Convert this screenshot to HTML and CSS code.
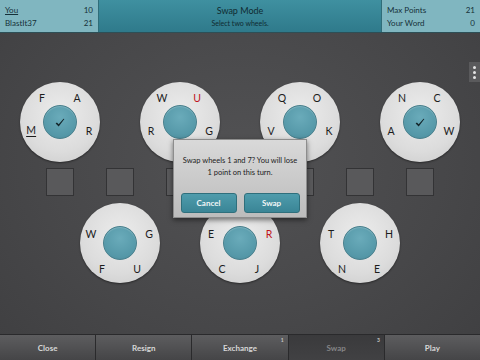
FILE: index.html
```html
<!DOCTYPE html>
<html lang="en">
<head>
    <meta charset="UTF-8">
    <title>Swap Mode</title>
    <link rel="stylesheet" href="styles.css">
</head>
<body>

<div class="screen">
    <header class="topbar">
        <div class="scores">
            <div class="row"><span class="me">You</span><span>10</span></div>
            <div class="row"><span>BlastIt37</span><span>21</span></div>
        </div>
        <div class="mode">
            <div class="mode-title">Swap Mode</div>
            <div class="mode-sub">Select two wheels.</div>
        </div>
        <div class="scores">
            <div class="row"><span>Max Points</span><span>21</span></div>
            <div class="row"><span>Your Word</span><span>0</span></div>
        </div>
    </header>

    <main class="board">
        <div class="wheels top">
            <div class="wheel">
                <span class="l a1">F</span><span class="l a2">A</span>
                <span class="l a3 under">M</span><span class="l a4">R</span>
                <div class="hub"><svg viewBox="0 0 16 16" width="14" height="14"><path d="M3 8.5 L6.5 12 L13 3.5 L12 3 L6.5 9.5 L4.5 7.3 Z" fill="#14262b"/></svg></div>
            </div>
            <div class="wheel">
                <span class="l a1">W</span><span class="l a2 red">U</span>
                <span class="l a3">R</span><span class="l a4">G</span>
                <div class="hub"></div>
            </div>
            <div class="wheel">
                <span class="l a1">Q</span><span class="l a2">O</span>
                <span class="l a3">V</span><span class="l a4">K</span>
                <div class="hub"></div>
            </div>
            <div class="wheel">
                <span class="l a1">N</span><span class="l a2">C</span>
                <span class="l a3">A</span><span class="l a4">W</span>
                <div class="hub"><svg viewBox="0 0 16 16" width="14" height="14"><path d="M3 8.5 L6.5 12 L13 3.5 L12 3 L6.5 9.5 L4.5 7.3 Z" fill="#14262b"/></svg></div>
            </div>
        </div>

        <div class="slots">
            <div class="slot"></div><div class="slot"></div><div class="slot"></div>
            <div class="slot"></div><div class="slot"></div><div class="slot"></div>
            <div class="slot"></div>
        </div>

        <div class="wheels bottom">
            <div class="wheel">
                <span class="l b1">W</span><span class="l b2">G</span>
                <span class="l b3">F</span><span class="l b4">U</span>
                <div class="hub"></div>
            </div>
            <div class="wheel">
                <span class="l b1">E</span><span class="l b2 red">R</span>
                <span class="l b3">C</span><span class="l b4">J</span>
                <div class="hub"></div>
            </div>
            <div class="wheel">
                <span class="l b1">T</span><span class="l b2">H</span>
                <span class="l b3">N</span><span class="l b4">E</span>
                <div class="hub"></div>
            </div>
        </div>

        <div class="menu-tab"><i></i><i></i><i></i></div>

        <div class="dialog">
            <p>Swap wheels 1 and 7? You will lose<br>1 point on this turn.</p>
            <div class="dialog-buttons">
                <button>Cancel</button>
                <button>Swap</button>
            </div>
        </div>
    </main>

    <footer class="toolbar">
        <button>Close</button>
        <button>Resign</button>
        <button>Exchange<sup>1</sup></button>
        <button class="active">Swap<sup>3</sup></button>
        <button>Play</button>
    </footer>
</div>

</body>
</html>
```

FILE: styles.css
```css
* {
    box-sizing: border-box;
}

body {
    margin: 0;
    font-family: Lato, "Open Sans", sans-serif;
    background-color: #474749;
}

.screen {
    width: 480px;
    height: 360px;
    display: flex;
    flex-direction: column;
    overflow: hidden;
    background: radial-gradient(ellipse at 50% 45%, #525254 0%, #474749 60%, #3f3f41 100%);
}

/* top bar */
.topbar {
    height: 33px;
    display: flex;
    border-bottom: 1px solid #2d4f56;
}

.scores {
    width: 98px;
    padding: 4px 5px 0 5px;
    background-color: #80b6c0;
    color: #153038;
    font-size: 8px;
}

.scores .row {
    display: flex;
    justify-content: space-between;
    height: 13px;
    line-height: 13px;
}

.me {
    text-decoration: underline;
}

.mode {
    flex: 1;
    background: linear-gradient(to bottom, #3f90a0, #2f7a8b);
    text-align: center;
    color: #102b31;
    border-left: 1px solid #2f6d79;
    border-right: 1px solid #2f6d79;
}

.mode-title {
    font-size: 9px;
    margin-top: 5px;
    line-height: 11px;
}

.mode-sub {
    font-size: 7px;
    margin-top: 3px;
    line-height: 9px;
}

/* board */
.board {
    flex: 1;
    position: relative;
    padding-top: 49px;
}

.wheels {
    display: flex;
}

.wheels.top {
    padding-left: 20px;
    gap: 40px;
}

.wheels.bottom {
    padding-left: 80px;
    gap: 40px;
}

.wheel {
    width: 80px;
    height: 80px;
    border-radius: 50%;
    background: radial-gradient(circle at 50% 40%, #ececec 0%, #dcdcdc 60%, #c9c9c9 100%);
    box-shadow: 0 1px 2px rgba(0,0,0,0.45);
    position: relative;
    display: flex;
    align-items: center;
    justify-content: center;
}

.hub {
    width: 34px;
    height: 34px;
    border-radius: 50%;
    background: radial-gradient(circle at 50% 35%, #6aabba 0%, #5598a8 70%, #4a8797 100%);
    border: 1px solid #477f8c;
    box-shadow: inset 0 1px 1px rgba(255,255,255,0.2);
    display: flex;
    align-items: center;
    justify-content: center;
}

.hub svg {
    margin-top: 1px;
}

.l {
    position: absolute;
    font-size: 10.5px;
    line-height: 10px;
    color: #1c1c1c;
    transform: translate(-50%, -50%);
}

.l.red {
    color: #c0141c;
}

.l.under {
    border-bottom: 1px solid #1c1c1c;
    padding-bottom: 1px;
}

.a1 { left: 22px; top: 16px; }
.a2 { left: 57px; top: 16px; }
.a3 { left: 11px; top: 49px; }
.a4 { left: 69px; top: 49px; }

.b1 { left: 11px; top: 31px; }
.b2 { left: 69px; top: 31px; }
.b3 { left: 22px; top: 66px; }
.b4 { left: 57px; top: 66px; }

.slots {
    display: flex;
    gap: 32px;
    padding-left: 46px;
    margin-top: 6px;
    margin-bottom: 7px;
}

.slot {
    width: 28px;
    height: 28px;
    background-color: #59595b;
    border: 1px solid #333335;
}

.menu-tab {
    position: absolute;
    right: 0;
    top: 29px;
    width: 11px;
    height: 20px;
    background-color: #5a5a5c;
    display: flex;
    flex-direction: column;
    align-items: center;
    justify-content: center;
    gap: 2px;
}

.menu-tab i {
    width: 3px;
    height: 3px;
    border-radius: 50%;
    background-color: #e4e4e4;
}

/* dialog */
.dialog {
    position: absolute;
    left: 173px;
    top: 106px;
    width: 134px;
    height: 79px;
    background: linear-gradient(to bottom, #d9d9d9, #bcbcbc);
    border: 1px solid #8d8d8d;
    box-shadow: 0 2px 5px rgba(0,0,0,0.5);
    padding: 15px 2px 0 2px;
    text-align: center;
}

.dialog p {
    margin: 0;
    font-size: 7.5px;
    line-height: 12px;
    color: #222;
}

.dialog-buttons {
    display: flex;
    justify-content: center;
    gap: 7px;
    margin-top: 14px;
}

.dialog-buttons button {
    width: 56px;
    height: 20px;
    border: 1px solid #2f6f7c;
    border-radius: 3px;
    background: linear-gradient(to bottom, #4f9cac, #3a8596);
    color: #f2f6f7;
    font-family: Lato, sans-serif;
    font-size: 8px;
    font-weight: bold;
    padding: 0;
}

/* bottom toolbar */
.toolbar {
    height: 26px;
    display: flex;
    border-top: 1px solid #2a2a2c;
}

.toolbar button {
    flex: 1;
    position: relative;
    border: none;
    border-right: 1px solid #2a2a2c;
    background: linear-gradient(to bottom, #5d5d5f, #454547);
    color: #d8d8d8;
    font-family: Lato, sans-serif;
    font-size: 8px;
    font-weight: bold;
    padding: 0;
}

.toolbar button:last-child {
    border-right: none;
}

.toolbar button.active {
    background: linear-gradient(to bottom, #3a3a3c, #414143);
    color: #858587;
}

.toolbar sup {
    position: absolute;
    right: 4px;
    top: 2px;
    font-size: 5px;
    color: #c8c8c8;
}
```
